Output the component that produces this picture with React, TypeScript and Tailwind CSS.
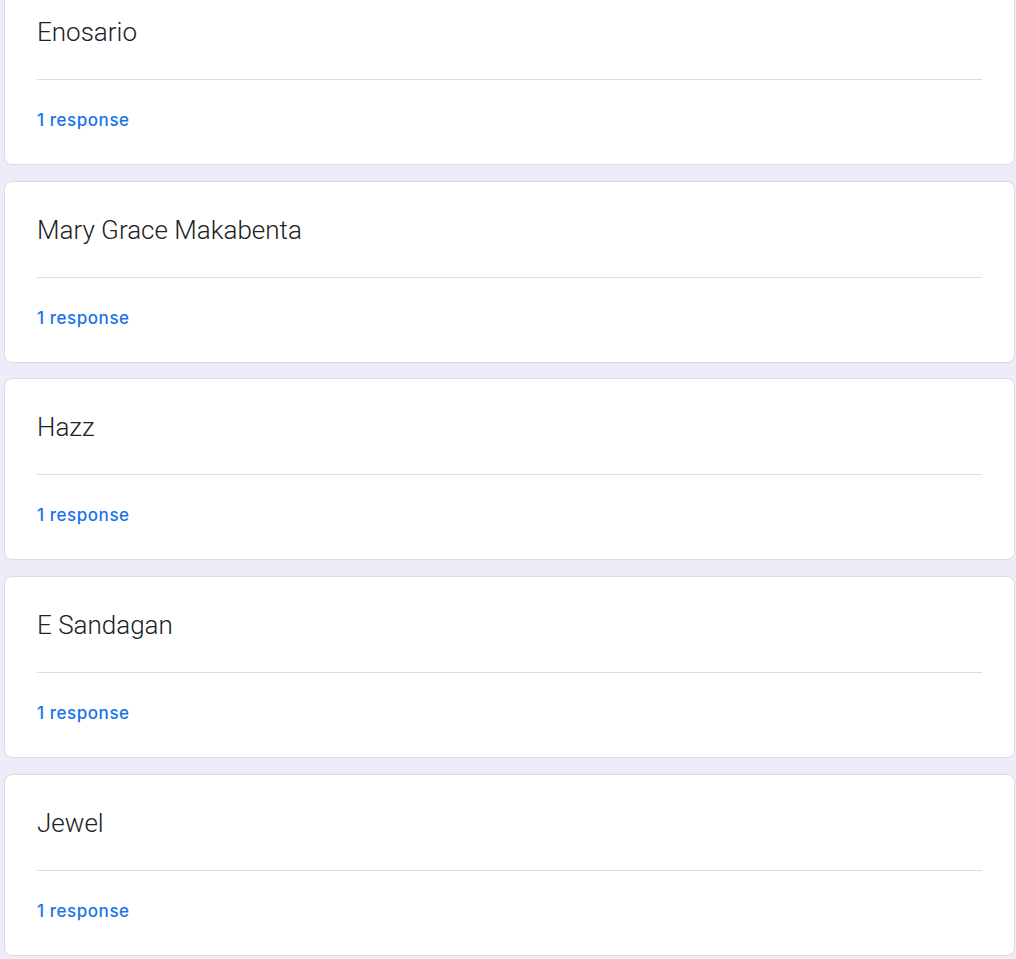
const names = ["Enosario", "Mary Grace Makabenta", "Hazz", "E Sandagan", "Jewel"];

function ResponseCard({ name }: { name: string }) {
  return (
    <div className="bg-white border border-[#dadce0] rounded-lg px-8 h-[182px] flex flex-col">
      <div className="pt-[30px] pb-[28px] border-b border-[#dadce0] text-[26px] leading-[37px] text-[#202124] font-light">
        {name}
      </div>
      <div
        className="pt-[28px] text-[17px] leading-6 font-medium tracking-[0.55px] text-[#1a73e8]"
        style={{ fontFamily: "Inter, Roboto, sans-serif" }}
      >
        1 response
      </div>
    </div>
  );
}

export default function App() {
  return (
    <div className="min-h-screen bg-[#f0ebf8] pl-1 pr-[1px] overflow-hidden" style={{ fontFamily: "Roboto, 'Liberation Sans', sans-serif" }}>
      <div className="-mt-[17px] flex flex-col gap-[15.7px]">
        {names.map((n) => (
          <ResponseCard key={n} name={n} />
        ))}
      </div>
    </div>
  );
}
